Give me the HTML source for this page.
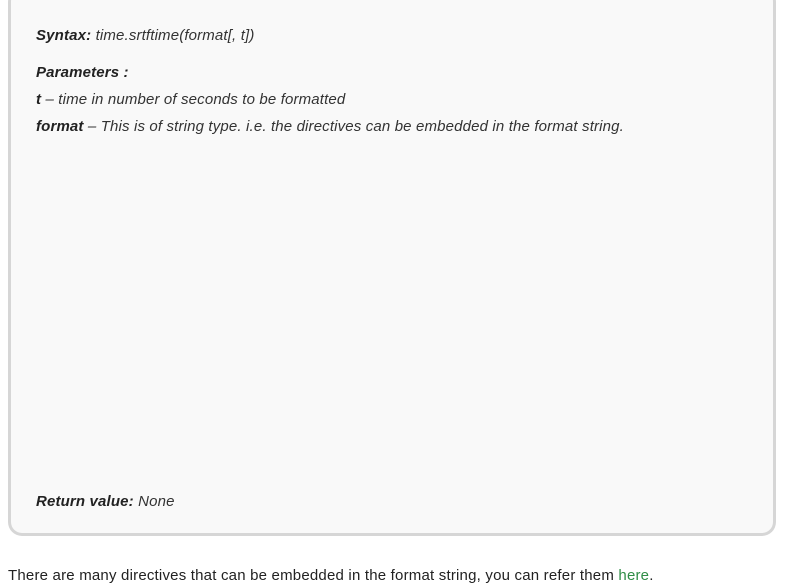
<!DOCTYPE html>
<html><head><style>
html,body{margin:0;padding:0;background:#fff;width:800px;height:587px;overflow:hidden;font-family:"Liberation Sans",sans-serif;color:#222;}
.box{position:absolute;left:8px;top:-12px;width:762px;height:545px;background:#f9f9f9;border:3px solid #d6d6d6;border-top:none;border-radius:14px;}
.t{position:absolute;left:36px;font-size:15px;font-style:italic;white-space:nowrap;letter-spacing:0.15px;color:#333;}
b{color:#222;}
.p{position:absolute;left:8px;top:567px;font-size:15px;white-space:nowrap;letter-spacing:0.2px;color:#222;}
a{color:#2f8d46;text-decoration:none;}
</style></head><body>
<div class="box"></div>
<div class="t" style="top:27px"><b>Syntax:</b> time.srtftime(format[, t])</div>
<div class="t" style="top:64px"><b>Parameters :</b></div>
<div class="t" style="top:91px"><b>t</b> – time in number of seconds to be formatted</div>
<div class="t" style="top:118px"><b>format</b> – This is of string type. i.e. the directives can be embedded in the format string.</div>
<div class="t" style="top:493px"><b>Return value:</b> None</div>
<div class="p">There are many directives that can be embedded in the format string, you can refer them <a>here</a>.</div>
</body></html>
